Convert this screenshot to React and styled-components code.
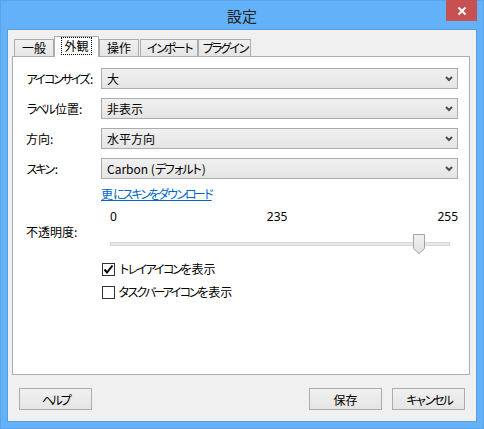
import React from 'react';
import styled, { createGlobalStyle } from 'styled-components';

const GlobalStyle = createGlobalStyle`
  html, body {
    margin: 0;
    padding: 0;
    background: #ffffff;
  }
  body {
    font-family: "Noto Sans CJK JP", "Noto Sans", sans-serif;
    font-size: 12px;
    color: #000;
  }
`;

// Noto's kana are full width; the original UI font packs them tighter
const Kana = styled.span`
  letter-spacing: -3px;
  margin-right: ${p => (p.$last ? 0 : 2)}px;
`;

const jp = text => {
  const parts = text.split(/([\u3040-\u30ff]+)/);
  return parts.map((part, i) =>
    /[\u3040-\u30ff]/.test(part) ? (
      <Kana key={i} $last={i >= parts.length - 2 && !parts[i + 1]}>{part}</Kana>
    ) : (
      part
    )
  );
};

const Window = styled.div`
  width: 484px;
  height: 429px;
  box-sizing: border-box;
  background: #63b1f9;
  border: 1px solid #5aa3e8;
  display: flex;
  flex-direction: column;
`;

const TitleBar = styled.div`
  height: 29px;
  position: relative;
  display: flex;
  align-items: center;
  justify-content: center;
  font-size: 15px;
  color: #222;
  padding-bottom: 1px;
  box-sizing: border-box;
`;

const CloseButton = styled.div`
  position: absolute;
  top: -1px;
  right: 6px;
  width: 31px;
  height: 21px;
  background: #c75050;
  display: flex;
  align-items: center;
  justify-content: center;
`;

const Client = styled.div`
  flex: 1;
  margin: 0 7px 7px 7px;
  background: #f0f0f0;
  box-shadow: 0 0 0 1px #579fe2;
  padding: 6px 6px 11px 4px;
  display: flex;
  flex-direction: column;
  box-sizing: border-box;
`;

const TabStrip = styled.div`
  display: flex;
  align-items: flex-end;
  padding-left: 2px;
  margin-bottom: -1px;
  position: relative;
  z-index: 1;
`;

const Tab = styled.div`
  width: ${p => p.$w}px;
  height: ${p => (p.$active ? 21 : 18)}px;
  margin-left: ${p => p.$gap || 0}px;
  box-sizing: border-box;
  border: 1px solid #acacac;
  border-bottom: ${p => (p.$active ? 'none' : '1px solid #acacac')};
  background: ${p => (p.$active ? '#ffffff' : 'linear-gradient(#f0f0f0, #e5e5e5)')};
  display: flex;
  align-items: center;
  justify-content: center;
  padding-bottom: ${p => (p.$active ? 2 : 0)}px;
  line-height: 14px;
  white-space: nowrap;
`;

const Focus = styled.span`
  border: 1px dotted #000;
  padding: 1px 2px;
`;

const Panel = styled.div`
  height: 319px;
  box-sizing: border-box;
  background: #fff;
  border: 1px solid #adadad;
  padding: 11px 11px 0 13px;
  display: flex;
  flex-direction: column;
`;

const Row = styled.div`
  display: flex;
  align-items: center;
  margin-top: ${p => p.$mt || 0}px;
`;

const Label = styled.div`
  width: 75px;
  flex-shrink: 0;
  line-height: 16px;
  white-space: nowrap;
`;

const Combo = styled.div`
  flex: 1;
  height: 21px;
  box-sizing: border-box;
  border: 1px solid #acacac;
  background: linear-gradient(#f0f0f0, #e5e5e5);
  display: flex;
  align-items: center;
  justify-content: space-between;
  padding: 0 4px 0 5px;
  line-height: 16px;
`;

const Link = styled.a`
  color: #0066cc;
  text-decoration: underline;
  line-height: 16px;
  cursor: pointer;
`;

const SliderBox = styled.div`
  flex: 1;
  display: flex;
  flex-direction: column;
`;

const Ticks = styled.div`
  display: flex;
  justify-content: space-between;
  padding-left: 9px;
  line-height: 16px;
  font-family: "Noto Sans", "Noto Sans CJK JP", sans-serif;
`;

const TrackArea = styled.div`
  height: 20px;
  margin: 9px 8px 0 9px;
  position: relative;
  display: flex;
  align-items: center;
`;

const Track = styled.div`
  flex: 1;
  height: 4px;
  box-sizing: border-box;
  background: #e7eaea;
  border: 1px solid #d6d6d6;
`;

const Thumb = styled.svg`
  position: absolute;
  top: 0;
  transform: translateX(-50%);
`;

const CheckRow = styled.label`
  display: flex;
  align-items: center;
  gap: 3px;
  margin-left: 76px;
  margin-top: ${p => p.$mt}px;
  line-height: 16px;
`;

const Box = styled.span`
  width: 13px;
  height: 13px;
  box-sizing: border-box;
  border: 1px solid #333;
  background: #fff;
  display: flex;
  align-items: center;
  justify-content: center;
`;

const ButtonRow = styled.div`
  display: flex;
  margin-top: 13px;
  padding: 0 5px 0 7px;
  gap: 10px;
`;

const Button = styled.div`
  width: 73px;
  height: 22px;
  box-sizing: border-box;
  border: 1px solid #acacac;
  background: linear-gradient(#f0f0f0, #e5e5e5);
  display: flex;
  align-items: center;
  justify-content: center;
  margin-left: ${p => (p.$push ? 'auto' : '0')};
`;

const Chevron = () => (
  <svg width="8" height="6" viewBox="0 0 8 6">
    <path d="M1 1 L4 4 L7 1" fill="none" stroke="#4d4d4d" strokeWidth="2" />
  </svg>
);

const tabs = [
  { t: '一般', w: 40 },
  { t: '外観', w: 45, active: true },
  { t: '操作', w: 40 },
  { t: 'インポート', w: 58, gap: 1 },
  { t: 'プラグイン', w: 53 },
];

const combos = [
  ['アイコンサイズ:', '大'],
  ['ラベル位置:', '非表示'],
  ['方向:', '水平方向'],
  ['スキン:', 'Carbon (デフォルト)'],
];

export default function App() {
  const value = 235;
  const pct = value / 255;

  return (
    <>
      <GlobalStyle />
      <Window>
        <TitleBar>
          設定
          <CloseButton>
            <svg width="10" height="10" viewBox="0 0 10 10">
              <path d="M1.5 1.5 L8.5 8.5 M8.5 1.5 L1.5 8.5" stroke="#fff" strokeWidth="2" />
            </svg>
          </CloseButton>
        </TitleBar>
        <Client>
          <TabStrip>
            {tabs.map(tab => (
              <Tab key={tab.t} $w={tab.w} $active={tab.active} $gap={tab.gap}>
                {tab.active ? <Focus>{jp(tab.t)}</Focus> : jp(tab.t)}
              </Tab>
            ))}
          </TabStrip>
          <Panel>
            {combos.map(([label, val], i) => (
              <Row key={label} $mt={i === 0 ? 0 : 9}>
                <Label>{jp(label)}</Label>
                <Combo>
                  <span>{jp(val)}</span>
                  <Chevron />
                </Combo>
              </Row>
            ))}
            <Row $mt={7}>
              <Label />
              <Link>{jp('更にスキンをダウンロード')}</Link>
            </Row>
            <Row $mt={7}>
              <Label>不透明度:</Label>
              <SliderBox>
                <Ticks>
                  <span>0</span>
                  <span>235</span>
                  <span>255</span>
                </Ticks>
                <TrackArea>
                  <Track />
                  <Thumb
                    width="12"
                    height="20"
                    viewBox="0 0 12 20"
                    style={{ left: `calc(5.5px + (100% - 11px) * ${pct})` }}
                  >
                    <defs>
                      <linearGradient id="tg" x1="0" y1="0" x2="0" y2="1">
                        <stop offset="0" stopColor="#f0f0f0" />
                        <stop offset="1" stopColor="#e2e2e2" />
                      </linearGradient>
                    </defs>
                    <path d="M0.5 0.5 H11.5 V14.5 L6 19.5 L0.5 14.5 Z" fill="url(#tg)" stroke="#a4a4a4" />
                  </Thumb>
                </TrackArea>
              </SliderBox>
            </Row>
            <CheckRow $mt={7}>
              <Box>
                <svg width="11" height="11" viewBox="0 0 11 11">
                  <path d="M1.5 5.5 L4 8.5 L9.5 1.5" fill="none" stroke="#000" strokeWidth="2" />
                </svg>
              </Box>
              <span>{jp('トレイアイコンを表示')}</span>
            </CheckRow>
            <CheckRow $mt={7}>
              <Box />
              <span>{jp('タスクバーアイコンを表示')}</span>
            </CheckRow>
          </Panel>
          <ButtonRow>
            <Button>{jp('ヘルプ')}</Button>
            <Button $push>保存</Button>
            <Button>{jp('キャンセル')}</Button>
          </ButtonRow>
        </Client>
      </Window>
    </>
  );
}
